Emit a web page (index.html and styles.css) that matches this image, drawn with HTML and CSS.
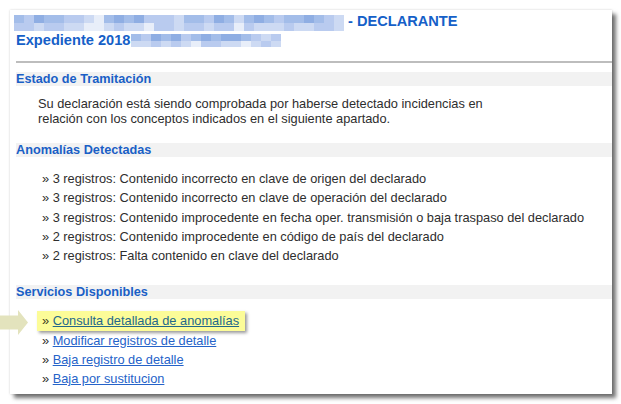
FILE: index.html
```html
<!DOCTYPE html>
<html lang="es">
<head>
<meta charset="utf-8">
<title>Expediente - Declarante</title>
<link rel="stylesheet" href="styles.css">
</head>
<body>
<div class="card">
  <div class="title">
    <div class="title-line">
      <div class="mosaic wide">
        <i class="s4"></i><i class="s3"></i><i class="s5"></i><i class="s4"></i><i class="s4"></i><i class="s3"></i><i class="s3"></i><i class="s2"></i><i class="s1"></i><i class="s4"></i><i class="s5"></i><i class="s4"></i><i class="s5"></i><i class="s3"></i><i class="s3"></i><i class="s3"></i><i class="s2"></i><i class="s4"></i><i class="s4"></i><i class="s3"></i><i class="s5"></i><i class="s4"></i><i class="s2"></i><i class="s4"></i><i class="s5"></i><i class="s4"></i><i class="s3"></i><i class="s4"></i><i class="s4"></i><i class="s5"></i><i class="s4"></i><i class="s3"></i><i class="s2"></i>
        <i class="s3"></i><i class="s3"></i><i class="s2"></i><i class="s3"></i><i class="s3"></i><i class="s2"></i><i class="s2"></i><i class="s1"></i><i class="s1"></i><i class="s2"></i><i class="s3"></i><i class="s2"></i><i class="s2"></i><i class="s1"></i><i class="s3"></i><i class="s3"></i><i class="s2"></i><i class="s3"></i><i class="s3"></i><i class="s2"></i><i class="s3"></i><i class="s3"></i><i class="s1"></i><i class="s3"></i><i class="s2"></i><i class="s2"></i><i class="s2"></i><i class="s3"></i><i class="s2"></i><i class="s2"></i><i class="s3"></i><i class="s3"></i><i class="s2"></i>
      </div>
      <span>- DECLARANTE</span>
    </div>
    <div class="title-line">
      <span>Expediente 2018</span>
      <div class="mosaic narrow">
        <i class="s4"></i><i class="s3"></i><i class="s5"></i><i class="s4"></i><i class="s5"></i><i class="s3"></i><i class="s4"></i><i class="s5"></i><i class="s4"></i><i class="s5"></i><i class="s5"></i><i class="s4"></i><i class="s3"></i><i class="s2"></i><i class="s3"></i>
        <i class="s2"></i><i class="s2"></i><i class="s3"></i><i class="s2"></i><i class="s3"></i><i class="s2"></i><i class="s1"></i><i class="s3"></i><i class="s3"></i><i class="s2"></i><i class="s2"></i><i class="s1"></i><i class="s2"></i><i class="s3"></i><i class="s2"></i>
      </div>
    </div>
  </div>
  <hr class="rule">

  <h2 class="section">Estado de Tramitación</h2>
  <p class="status">Su declaración está siendo comprobada por haberse detectado incidencias en relación con los conceptos indicados en el siguiente apartado.</p>

  <h2 class="section sec-gap">Anomalías Detectadas</h2>
  <ul class="items">
    <li>» 3 registros: Contenido incorrecto en clave de origen del declarado</li>
    <li>» 3 registros: Contenido incorrecto en clave de operación del declarado</li>
    <li>» 3 registros: Contenido improcedente en fecha oper. transmisión o baja traspaso del declarado</li>
    <li>» 2 registros: Contenido improcedente en código de país del declarado</li>
    <li>» 2 registros: Falta contenido en clave del declarado</li>
  </ul>

  <h2 class="section sec-gap2">Servicios Disponibles</h2>
  <ul class="links">
    <li class="highlight">» <a href="#">Consulta detallada de anomalías</a></li>
    <li>» <a href="#">Modificar registros de detalle</a></li>
    <li>» <a href="#">Baja registro de detalle</a></li>
    <li>» <a href="#">Baja por sustitucion</a></li>
  </ul>
</div>
<svg class="pointer" width="30" height="28" viewBox="0 0 30 28" aria-hidden="true">
  <polygon points="0,6.5 18,6.5 18,1 28,13.5 18,26 18,20.5 0,20.5" fill="#e3e3bd"/>
</svg>
</body>
</html>
```
FILE: styles.css
```css
html, body {
  margin: 0;
  padding: 0;
  background: #ffffff;
}

body {
  font-family: "Liberation Sans", Arial, sans-serif;
  color: #2e2e2e;
  position: relative;
  width: 621px;
  height: 404px;
  overflow: hidden;
}

.card {
  margin: 10px 0 0 10px;
  width: 602px;
  height: 384px;
  box-sizing: border-box;
  padding: 2px 0 0 6px;
  background: #ffffff;
  box-shadow: 4px 4px 4px rgba(0, 0, 0, 0.55), 0 0 2px rgba(0, 0, 0, 0.18);
}

.title {
  color: #1560c8;
  font-weight: bold;
  font-size: 14.6px;
  line-height: 19px;
}

.title-line {
  display: flex;
  align-items: center;
  height: 19px;
}

.title-line span {
  white-space: nowrap;
}

.mosaic {
  display: grid;
  grid-template-columns: repeat(33, 10px);
  grid-auto-rows: 8px;
}

.mosaic.wide {
  margin-left: -2px;
  margin-right: 4px;
  margin-top: 2px;
}

.mosaic.narrow {
  grid-template-columns: repeat(15, 10px);
  grid-auto-rows: 6.5px;
  margin-left: 1px;
}

.mosaic i {
  display: block;
}

.s1 { background: #e8eef9; }
.s2 { background: #cddaf3; }
.s3 { background: #b9cbef; }
.s4 { background: #a3bde9; }
.s5 { background: #8faee3; }

.rule {
  margin: 11px 0 0 0;
  border: 0;
  height: 2px;
  background: #bdbdbd;
}

.section {
  margin: 9px 0 0 0;
  height: 14px;
  line-height: 14px;
  font-size: 12.7px;
  font-weight: bold;
  color: #1a5fc6;
  background: #f2f2f2;
}

.sec-gap {
  margin-top: 17px;
}

.sec-gap2 {
  margin-top: 20px;
}

.status {
  margin: 10px 0 0 22px;
  width: 470px;
  font-size: 12.8px;
  line-height: 15px;
}

.items,
.links {
  list-style: none;
  margin: 12px 0 0 0;
  padding: 0 0 0 26px;
  font-size: 12.8px;
}

.items li {
  line-height: 19.25px;
  white-space: nowrap;
}

.links li {
  line-height: 19.4px;
  white-space: nowrap;
}

.links a {
  color: #2563c9;
  text-decoration: underline;
}

.links .highlight {
  width: fit-content;
  margin-left: -5px;
  padding: 0 6px 0 5px;
  background: #fcfc98;
  color: #3a3a20;
  box-shadow: 2px 2px 3px rgba(0, 0, 0, 0.4);
}

.links .highlight a {
  color: #23688a;
}

.pointer {
  position: absolute;
  left: 0;
  top: 309px;
}
```
